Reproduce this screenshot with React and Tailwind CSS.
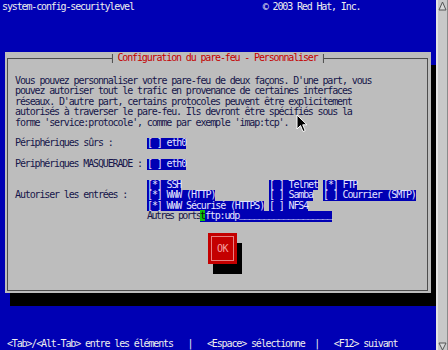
export default function App() {
  const box = "bg-[#0000b4] text-[#e4e4ff] whitespace-pre inline-block shrink-0";
  const underscores = "_".repeat(19);
  return (
    <div className="relative w-[448px] h-[350px] flex overflow-hidden font-['DejaVu_Sans_Mono',monospace] text-[10px] tracking-[-1.14px] leading-[10.4px]">
      <div className="w-[436px] h-full bg-[#0000b4] flex flex-col">
        <div className="h-[14px] pl-[2px] flex items-center text-[#eeeeee] whitespace-pre">
          <span>system-config-securitylevel</span>
          <span className="ml-[129px]">© 2003 Red Hat, Inc.</span>
        </div>

        <div className="mt-[38px] ml-[5px] w-[426px] h-[241px] bg-[#bdbdbd] shadow-[5px_13px_0_#000] pt-[6px] pl-[2px] pr-[3px] pb-[2px]">
          <div className="relative h-full border border-[#4d4d4d] pl-[7px] pt-[17px] text-[#16164a]">
            <div className="absolute -top-[5px] left-1/2 -translate-x-1/2 h-[9px] flex items-center bg-[#bdbdbd] border-x border-[#4d4d4d] px-[5px] text-[#c40000] whitespace-pre">
              Configuration du pare-feu - Personnaliser
            </div>

            <div className="whitespace-pre">
              <div>Vous pouvez personnaliser votre pare-feu de deux façons. D'une part, vous</div>
              <div>pouvez autoriser tout le trafic en provenance de certaines interfaces</div>
              <div>réseaux. D'autre part, certains protocoles peuvent être explicitement</div>
              <div>autorisés à traverser le pare-feu. Ils devront être spécifiés sous la</div>
              <div>forme 'service:protocole', comme par exemple 'imap:tcp'.</div>
            </div>

            <div className="mt-[10.4px] flex whitespace-pre">
              <div className="w-[132px] shrink-0">Périphériques sûrs :</div>
              <span className={box}>[ ] eth0</span>
            </div>

            <div className="mt-[10.4px] flex whitespace-pre">
              <div className="w-[132px] shrink-0">Périphériques MASQUERADE :</div>
              <span className={box}>[ ] eth0</span>
            </div>

            <div className="mt-[10.4px] flex whitespace-pre">
              <div className="w-[132px] shrink-0 pt-[10.4px]">Autoriser les entrées :</div>
              <div className="shrink-0">
                <div className="grid grid-cols-[122px_54px_auto]">
                  <div><span className={box}>[*] SSH</span></div>
                  <div><span className={box}>[ ] Telnet</span></div>
                  <div><span className={box}>[*] FTP</span></div>
                  <div><span className={box}>[*] WWW (HTTP)</span></div>
                  <div><span className={box}>[ ] Samba</span></div>
                  <div><span className={box}>[ ] Courrier (SMTP)</span></div>
                  <div><span className={box}>[*] WWW Sécurisé (HTTPS)</span></div>
                  <div><span className={box}>[ ] NFS4</span></div>
                  <div></div>
                </div>
                <div className="flex">
                  <span className="w-[53px] shrink-0 tracking-[-1.6px]">Autres ports</span>
                  <span className={box}>
                    <span className="bg-[#10c010] text-[#101010]">t</span>
                    ftp:udp
                    <span className="relative -top-[2px]">{underscores}</span>
                  </span>
                </div>
              </div>
            </div>

            <div className="mt-[11.6px] ml-[193px] w-[29px] h-[31px] bg-[#c40000] shadow-[5px_10px_0_#000] p-[3px]">
              <div className="h-full border border-[#e88080] flex items-center justify-center text-[#f4a0a0] tracking-[-0.5px]">
                OK
              </div>
            </div>
          </div>
        </div>

        <div className="mt-auto h-[12px] pl-[2px] flex items-center text-[#eeeeee] whitespace-pre">
          {" <Tab>/<Alt-Tab> entre les éléments   |   <Espace> sélectionne  |   <F12> suivant"}
        </div>
      </div>

      <div className="w-[12px] h-full bg-[#c8c8c8] border-l-2 border-[#e4e4e4] border-r border-r-[#8a8a8a] flex flex-col justify-between items-center">
        <svg width="9" height="10" viewBox="0 0 9 10" className="mt-[1px]">
          <path d="M4.5 1 L8 9 L1 9 Z" fill="#d8d8d8" stroke="#555" strokeWidth="1" />
        </svg>
        <svg width="9" height="8" viewBox="0 0 9 8">
          <path d="M1 1 L8 1 L4.5 8 Z" fill="#d8d8d8" stroke="#555" strokeWidth="1" />
        </svg>
      </div>

      <svg width="12" height="20" viewBox="0 0 12 20" className="absolute left-[296px] top-[114px]">
        <path d="M1 1 L1 15 L4.5 11.5 L7 17.5 L9.2 16.6 L6.7 10.8 L11 10.8 Z" fill="#000" stroke="#fff" strokeWidth="1" />
      </svg>
    </div>
  );
}
